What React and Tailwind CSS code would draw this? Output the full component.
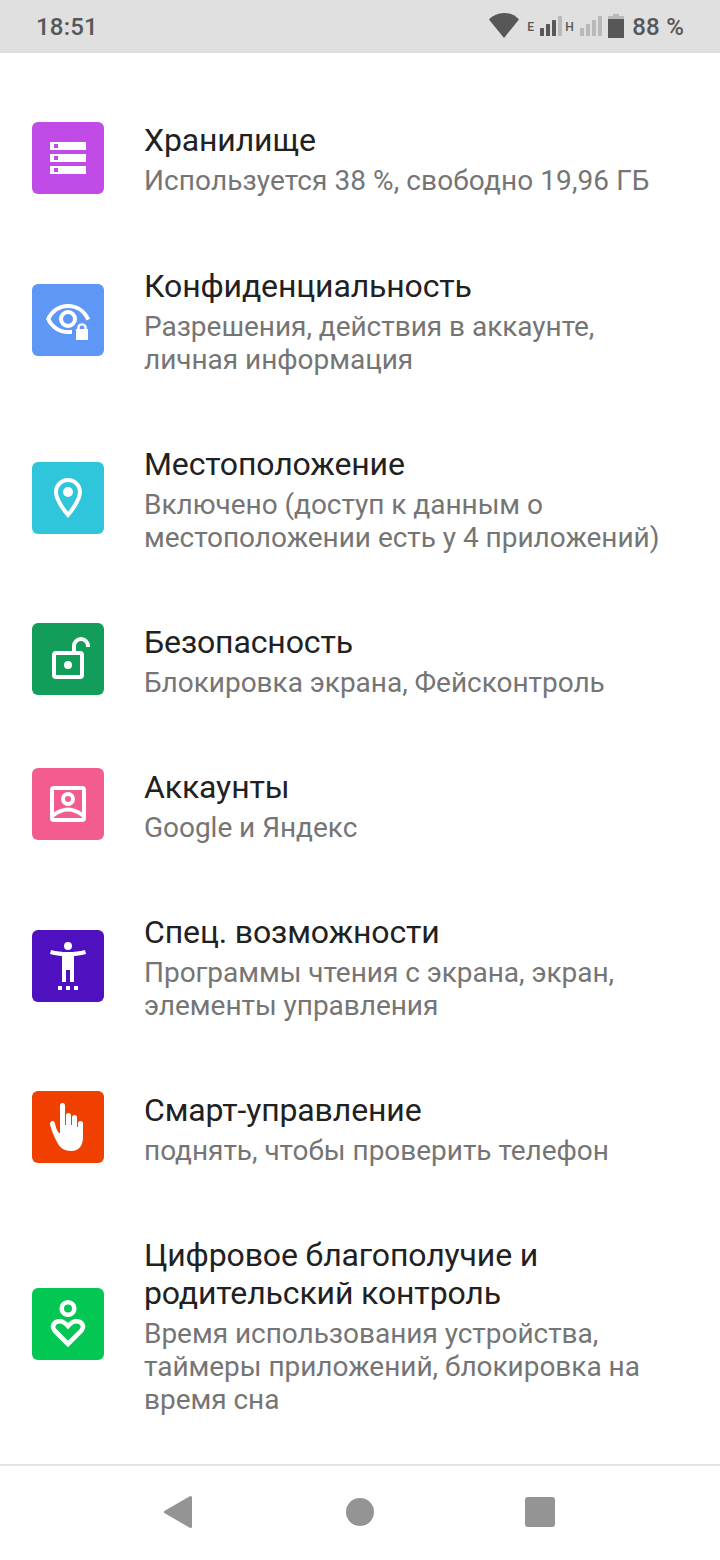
import React from 'react';

const StorageIcon = () => (
  <path
    fill="#fff"
    fillRule="evenodd"
    d="M18 20h36v8H18zM22 22v4h4v-4zM18 32h36v8H18zM22 34v4h4v-4zM18 44h36v8H18zM22 46v4h4v-4z"
  />
);

const PrivacyIcon = () => (
  <>
    <g fill="none" stroke="#fff" strokeWidth="4">
      <path d="M56.3 35.6C52.5 27.5 45 22 36 22S19.5 27.5 16.2 35C19.5 42.5 27 48 36 48h4" />
      <circle cx="36" cy="35" r="7" />
    </g>
    <path fill="#5e97f6" d="M42.5 58V44c0-4 3-7.5 7.5-7.5s7.5 3.5 7.5 7.5v14z" />
    <path fill="#fff" d="M44 45h12v11H44z" />
    <path fill="none" stroke="#fff" strokeWidth="2.4" d="M46.4 46v-2a3.6 3.6 0 0 1 7.2 0v2" />
  </>
);

const LocationIcon = () => (
  <g fill="#fff" transform="translate(12 12) scale(2)">
    <path d="M12 2C8.13 2 5 5.13 5 9c0 5.25 7 13 7 13s7-7.75 7-13c0-3.87-3.13-7-7-7zM7 9c0-2.76 2.24-5 5-5s5 2.24 5 5c0 2.88-2.88 7.19-5 9.88C9.92 16.21 7 11.85 7 9z" />
    <circle cx="12" cy="9" r="2.5" />
  </g>
);

const SecurityIcon = () => (
  <>
    <g fill="none" stroke="#fff" strokeWidth="4">
      <rect x="22" y="30" width="28" height="24" rx="2" />
      <path d="M42 30v-7a7 7 0 0 1 14 0v1" />
    </g>
    <circle cx="36" cy="42" r="4" fill="#fff" />
  </>
);

const AccountsIcon = () => (
  <g fill="none" stroke="#fff" strokeWidth="4">
    <rect x="20" y="20" width="32" height="32" rx="2" />
    <circle cx="36" cy="31" r="5" />
    <path d="M21 47.5Q36 35.5 51 47.5" />
  </g>
);

const AccessibilityIcon = () => (
  <g fill="#fff" transform="translate(12 12) scale(2)">
    <circle cx="12" cy="2" r="2" />
    <path d="M20.5 4c-2.61.7-5.67 1-8.5 1s-5.89-.3-8.5-1L3 6c1.86.5 4 .83 6 1v13h2v-6h2v6h2V7c2-.17 4.14-.5 6-1l-.5-2z" />
    <path d="M7 22h2v2H7zM11 22h2v2h-2zM15 22h2v2h-2z" />
  </g>
);

const HandIcon = () => (
  <path
    fill="#fff"
    d="M28 42.5v-28a2.5 2.5 0 0 1 5 0V34h1v-9.5a2.5 2.5 0 0 1 5 0V34h1v-7.5a2.5 2.5 0 0 1 5 0V36h1v-3.500a2.500 2.500 0 0 1 5 0V46C51 54.500 47 60 39.500 60 32 60 28 57 25 51 22 45.500 19.500 39.500 18 33.500 17.500 30 21.500 29 22.600 31.500 24 36 25 41.500 28 42.500z"
  />
);

const WellbeingIcon = () => (
  <g fill="none" stroke="#fff" strokeWidth="4.6">
    <circle cx="36" cy="20.5" r="6.3" />
    <path d="M36 56L23.500 43.500C18.500 38.300 22 33.200 27.800 33.200 31.500 33.200 33.800 35.500 36 38 38.200 35.500 40.500 33.200 44.200 33.200 50 33.200 53.500 38.300 48.500 43.500z" />
  </g>
);

const items = [
  {
    icon: StorageIcon,
    color: 'bg-[#c14be6]',
    title: ['Хранилище'],
    summary: ['Используется 38 %, свободно 19,96 ГБ']
  },
  {
    icon: PrivacyIcon,
    color: 'bg-[#5e97f6]',
    title: ['Конфиденциальность'],
    summary: ['Разрешения, действия в аккаунте,', 'личная информация']
  },
  {
    icon: LocationIcon,
    color: 'bg-[#2fc6dc]',
    title: ['Местоположение'],
    summary: ['Включено (доступ к данным о', 'местоположении есть у 4 приложений)']
  },
  {
    icon: SecurityIcon,
    color: 'bg-[#129e5a]',
    title: ['Безопасность'],
    summary: ['Блокировка экрана, Фейсконтроль']
  },
  {
    icon: AccountsIcon,
    color: 'bg-[#f25c8e]',
    title: ['Аккаунты'],
    summary: ['Google и Яндекс']
  },
  {
    icon: AccessibilityIcon,
    color: 'bg-[#4f10c0]',
    title: ['Спец. возможности'],
    summary: ['Программы чтения с экрана, экран,', 'элементы управления']
  },
  {
    icon: HandIcon,
    color: 'bg-[#ef4000]',
    title: ['Смарт-управление'],
    summary: ['поднять, чтобы проверить телефон']
  },
  {
    icon: WellbeingIcon,
    color: 'bg-[#02c853]',
    title: ['Цифровое благополучие и', 'родительский контроль'],
    summary: ['Время использования устройства,', 'таймеры приложений, блокировка на', 'время сна']
  }
];

const SignalBars = ({ level }) => (
  <svg className="h-5 w-[22px]" viewBox="0 0 22 20">
    {[8, 12, 16, 20].map((h, i) => (
      <rect key={h} x={i * 6} y={20 - h} width="4" height={h} rx="0.5" fill={i < level ? '#575757' : '#b9b9b9'} />
    ))}
  </svg>
);

const StatusBar = () => (
  <header className="flex h-[53px] items-start justify-between bg-[#e0e0e0] pl-9 pr-9 text-[#575757]">
    <span className="pt-[13px] text-2xl/[28px] font-medium tracking-[0.2px]">18:51</span>
    <div className="flex items-start">
      <svg className="mt-[13px] h-[25px] w-[30px]" viewBox="0 0 30 25">
        <path fill="#575757" d="M0 6.5Q6 0 15 0t15 6.5L15 25z" />
      </svg>
      <span className="ml-2 mt-[20px] w-[13px] text-[12px]/[14px] font-medium">E</span>
      <div className="mt-4 flex">
        <SignalBars level={3} />
      </div>
      <span className="ml-[3px] mt-[20px] w-[15px] text-[12px]/[14px] font-medium">H</span>
      <div className="mt-4 flex">
        <SignalBars level={0} />
      </div>
      <svg className="ml-1.5 mt-3.5 h-6 w-4" viewBox="0 0 16 24">
        <path fill="#b9b9b9" d="M5 0h6v2h5v4H0V2h5z" />
        <path fill="#575757" d="M0 5h16v19H0z" />
      </svg>
      <span className="ml-2 pt-[13px] text-2xl/[28px] font-medium tracking-[0.2px]">88 %</span>
    </div>
  </header>
);

const SettingsItem = ({ item }) => {
  const Icon = item.icon;
  return (
    <li className="group flex items-center gap-10 py-[33px] pl-8">
      <div className={`h-[72px] w-[72px] shrink-0 rounded-md ${item.color}`}>
        <svg className="block h-full w-full" viewBox="0 0 72 72">
          <Icon />
        </svg>
      </div>
      <div className="whitespace-nowrap pt-[3px] group-first:pb-px group-first:pt-[2px]">
        <h2 className="text-[32px]/[38px] tracking-[-0.13px] text-[#212121]">
          {item.title.map((line) => (
            <span key={line} className="block">{line}</span>
          ))}
        </h2>
        <p className="mt-[5px] text-[28px]/[33px] tracking-[-0.03px] text-[#757575] group-first:tracking-[0.09px]">
          {item.summary.map((line) => (
            <span key={line} className="block">{line}</span>
          ))}
        </p>
      </div>
    </li>
  );
};

const NavigationBar = () => (
  <nav className="flex h-24 items-center justify-center gap-[120px] border-t-2 border-[#e3e3e3] pb-0.5">
    <svg className="h-[60px] w-[60px]" viewBox="0 0 60 60">
      <path
        fill="#949494"
        stroke="#949494"
        strokeWidth="3"
        strokeLinejoin="round"
        d="M15.5 30L40.5 15.5v29z"
      />
    </svg>
    <svg className="h-[60px] w-[60px]" viewBox="0 0 60 60">
      <circle cx="30" cy="30" r="14" fill="#949494" />
    </svg>
    <svg className="h-[60px] w-[60px]" viewBox="0 0 60 60">
      <rect x="15" y="15" width="30" height="30" rx="3" fill="#949494" />
    </svg>
  </nav>
);

const App = () => {
  return (
    <div className="flex h-[1560px] w-[720px] flex-col overflow-hidden bg-white font-['Roboto','Noto_Sans',sans-serif]">
      <StatusBar />
      <main className="flex-1 pt-[32.7px]">
        <ul>
          {items.map((item) => (
            <SettingsItem key={item.title[0]} item={item} />
          ))}
        </ul>
      </main>
      <NavigationBar />
    </div>
  );
};

export default App;
